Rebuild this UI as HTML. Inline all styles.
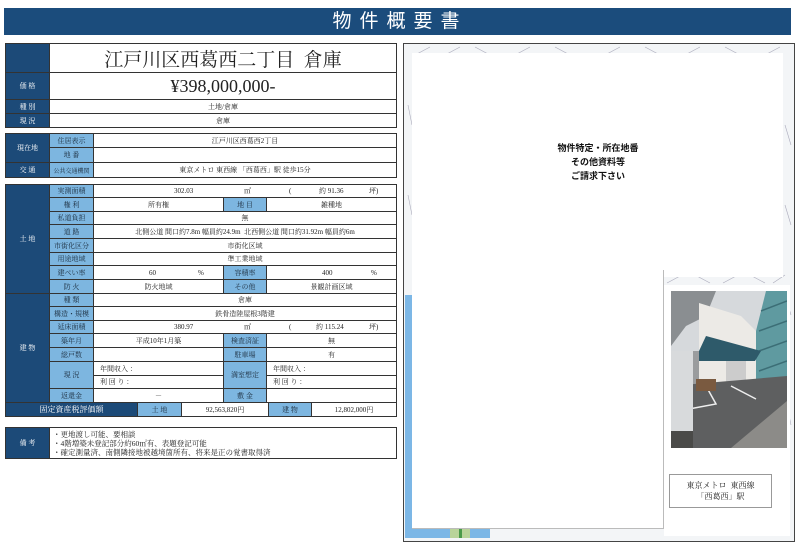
<!DOCTYPE html>
<html><head><meta charset="utf-8"><style>
*{margin:0;padding:0;box-sizing:border-box}
body{width:797px;height:550px;background:#fff;position:relative;overflow:hidden;font-family:"Liberation Serif","Noto Serif CJK SC",serif;color:#222}
div{position:absolute}
.c{border:1px solid #333;display:flex;align-items:center;justify-content:center;font-size:7px;white-space:nowrap;overflow:hidden}
.d{background:#1c4a78;color:#fff}
.l{background:#7db6e0;color:#1a2a3a}
.w{background:#fff}
</style></head><body>
<div style="left:4px;top:8px;width:787px;height:27px;background:#1b4c7c"></div>
<div style="left:300px;top:9px;width:200px;height:26px;color:#fff;font-family:'Liberation Sans','Noto Sans CJK JP',sans-serif;font-size:19px;letter-spacing:8px;text-align:center;line-height:26px">物件概要書</div>

<div class="c d" style="left:5px;top:43px;width:45px;height:30px"></div>
<div class="c w" style="left:49px;top:43px;width:348px;height:30px;font-size:19px">江戸川区西葛西二丁目&nbsp;&nbsp;倉庫</div>
<div class="c d" style="left:5px;top:72px;width:45px;height:28px">価 格</div>
<div class="c w" style="left:49px;top:72px;width:348px;height:28px;font-size:18px">¥398,000,000-</div>
<div class="c d" style="left:5px;top:99px;width:45px;height:15px">種 別</div>
<div class="c w" style="left:49px;top:99px;width:348px;height:15px">土地/倉庫</div>
<div class="c d" style="left:5px;top:113px;width:45px;height:15px">現 況</div>
<div class="c w" style="left:49px;top:113px;width:348px;height:15px">倉庫</div>

<div class="c d" style="left:5px;top:133px;width:45px;height:30px">現在地</div>
<div class="c l" style="left:49px;top:133px;width:45px;height:15px">住居表示</div>
<div class="c w" style="left:93px;top:133px;width:304px;height:15px">江戸川区西葛西2丁目</div>
<div class="c l" style="left:49px;top:147px;width:45px;height:16px">地 番</div>
<div class="c w" style="left:93px;top:147px;width:304px;height:16px"></div>
<div class="c d" style="left:5px;top:162px;width:45px;height:16px">交 通</div>
<div class="c l" style="left:49px;top:162px;width:45px;height:16px;font-size:6px">公共交通機関</div>
<div class="c w" style="left:93px;top:162px;width:304px;height:16px">東京メトロ 東西線 「西葛西」駅 徒歩15分</div>

<div class="c d" style="left:5px;top:184px;width:45px;height:110px">土 地</div>
<div class="c d" style="left:5px;top:293px;width:45px;height:110px">建 物</div>
<div class="c l" style="left:49px;top:184px;width:45px;height:14px">実測面積</div>
<div class="c w" style="left:93px;top:184px;width:304px;height:14px;justify-content:flex-start"><span style="position:absolute;left:80px">302.03</span><span style="position:absolute;left:150px">㎡</span><span style="position:absolute;left:195px">(</span><span style="position:absolute;left:225px">約 91.36</span><span style="position:absolute;left:275px">坪)</span></div>
<div class="c l" style="left:49px;top:197px;width:45px;height:15px">権 利</div>
<div class="c w" style="left:93px;top:197px;width:131px;height:15px">所有権</div>
<div class="c l" style="left:223px;top:197px;width:44px;height:15px">地 目</div>
<div class="c w" style="left:266px;top:197px;width:131px;height:15px">雑種地</div>
<div class="c l" style="left:49px;top:211px;width:45px;height:14px">私道負担</div>
<div class="c w" style="left:93px;top:211px;width:304px;height:14px">無</div>
<div class="c l" style="left:49px;top:224px;width:45px;height:15px">道 路</div>
<div class="c w" style="left:93px;top:224px;width:304px;height:15px">北側公道 間口約7.8m 幅員約24.9m &nbsp;北西側公道 間口約31.92m 幅員約6m</div>
<div class="c l" style="left:49px;top:238px;width:45px;height:15px">市街化区分</div>
<div class="c w" style="left:93px;top:238px;width:304px;height:15px">市街化区域</div>
<div class="c l" style="left:49px;top:252px;width:45px;height:14px">用途地域</div>
<div class="c w" style="left:93px;top:252px;width:304px;height:14px">準工業地域</div>
<div class="c l" style="left:49px;top:265px;width:45px;height:15px">建ぺい率</div>
<div class="c w" style="left:93px;top:265px;width:131px;height:15px"><span style="position:absolute;left:55px">60</span><span style="position:absolute;left:104px">%</span></div>
<div class="c l" style="left:223px;top:265px;width:44px;height:15px">容積率</div>
<div class="c w" style="left:266px;top:265px;width:131px;height:15px"><span style="position:absolute;left:55px">400</span><span style="position:absolute;left:104px">%</span></div>
<div class="c l" style="left:49px;top:279px;width:45px;height:15px">防 火</div>
<div class="c w" style="left:93px;top:279px;width:131px;height:15px">防火地域</div>
<div class="c l" style="left:223px;top:279px;width:44px;height:15px">その他</div>
<div class="c w" style="left:266px;top:279px;width:131px;height:15px">景観計画区域</div>

<div class="c l" style="left:49px;top:293px;width:45px;height:14px">種 類</div>
<div class="c w" style="left:93px;top:293px;width:304px;height:14px">倉庫</div>
<div class="c l" style="left:49px;top:306px;width:45px;height:15px">構造・規模</div>
<div class="c w" style="left:93px;top:306px;width:304px;height:15px">鉄骨造陸屋根3階建</div>
<div class="c l" style="left:49px;top:320px;width:45px;height:14px">延床面積</div>
<div class="c w" style="left:93px;top:320px;width:304px;height:14px"><span style="position:absolute;left:80px">380.97</span><span style="position:absolute;left:150px">㎡</span><span style="position:absolute;left:195px">(</span><span style="position:absolute;left:222px">約 115.24</span><span style="position:absolute;left:275px">坪)</span></div>
<div class="c l" style="left:49px;top:333px;width:45px;height:15px">築年月</div>
<div class="c w" style="left:93px;top:333px;width:131px;height:15px">平成10年1月築</div>
<div class="c l" style="left:223px;top:333px;width:44px;height:15px">検査済証</div>
<div class="c w" style="left:266px;top:333px;width:131px;height:15px">無</div>
<div class="c l" style="left:49px;top:347px;width:45px;height:15px">総戸数</div>
<div class="c w" style="left:93px;top:347px;width:131px;height:15px"></div>
<div class="c l" style="left:223px;top:347px;width:44px;height:15px">駐車場</div>
<div class="c w" style="left:266px;top:347px;width:131px;height:15px">有</div>
<div class="c l" style="left:49px;top:361px;width:45px;height:28px">現 況</div>
<div class="c w" style="left:93px;top:361px;width:131px;height:15px;justify-content:flex-start;padding-left:6px">年間収入 ：</div>
<div class="c w" style="left:93px;top:375px;width:131px;height:14px;justify-content:flex-start;padding-left:6px">利 回 り ：</div>
<div class="c l" style="left:223px;top:361px;width:44px;height:28px">満室想定</div>
<div class="c w" style="left:266px;top:361px;width:131px;height:15px;justify-content:flex-start;padding-left:6px">年間収入 ：</div>
<div class="c w" style="left:266px;top:375px;width:131px;height:14px;justify-content:flex-start;padding-left:6px">利 回 り ：</div>
<div class="c l" style="left:49px;top:388px;width:45px;height:15px">返還金</div>
<div class="c w" style="left:93px;top:388px;width:131px;height:15px">－</div>
<div class="c l" style="left:223px;top:388px;width:44px;height:15px">敷 金</div>
<div class="c w" style="left:266px;top:388px;width:131px;height:15px"></div>
<div class="c d" style="left:5px;top:402px;width:133px;height:15px;font-size:8px">固定資産税評価額</div>
<div class="c l" style="left:137px;top:402px;width:45px;height:15px">土 地</div>
<div class="c w" style="left:181px;top:402px;width:88px;height:15px">92,563,820円</div>
<div class="c l" style="left:268px;top:402px;width:44px;height:15px">建 物</div>
<div class="c w" style="left:311px;top:402px;width:86px;height:15px">12,802,000円</div>

<div class="c d" style="left:5px;top:427px;width:45px;height:32px">備 考</div>
<div class="c w" style="left:49px;top:427px;width:348px;height:32px;display:block;padding:2px 3px;font-size:7.5px;line-height:9px">・更地渡し可能、要相談<br>・4階増築未登記部分約60㎡有、表題登記可能<br>・確定測量済、南側隣接地被越境箇所有、将来是正の覚書取得済</div>

<div style="left:403px;top:43px;width:392px;height:499px;border:1.5px solid #444;background:#f3f5f7"></div>
<svg style="position:absolute;left:405px;top:45px" width="388" height="495">
<g stroke="#aab" stroke-width="0.6" fill="none">
<path d="M10 10 L25 2 M40 10 L55 2 M70 2 L85 10 M110 10 L125 2 M150 2 L165 10 M200 10 L215 2 M240 2 L255 10 M280 10 L295 2 M320 2 L335 10 M360 10 L375 2"/>
<path d="M262 238 L277 230 M290 230 L305 238 M318 238 L333 230 M345 230 L360 238 M368 238 L380 230"/>
<path d="M3 60 L7 80 M3 150 L7 170 M380 80 L386 100 M380 160 L386 180 M380 250 L386 270 M380 350 L386 380"/>
</g>
<rect x="0" y="250" width="7" height="243" fill="#7cb7e6"/>
<rect x="0" y="483" width="85" height="10" fill="#7cb7e6"/>
<rect x="45" y="483" width="20" height="10" fill="#b9d49a"/>
<rect x="54" y="483" width="3" height="10" fill="#4a9a4a"/>
</svg>
<div style="left:412px;top:53px;width:371px;height:224px;background:#fff"></div>
<div style="left:412px;top:270px;width:252px;height:259px;background:#fff;border-right:1px solid #bbb;border-bottom:1px solid #bbb"></div>
<div style="left:664px;top:285px;width:126px;height:251px;background:#fff"></div>
<div style="left:500px;top:141px;width:196px;text-align:center;font-family:'Liberation Sans','Noto Sans CJK JP',sans-serif;font-weight:bold;font-size:9px;line-height:14px;color:#111">物件特定・所在地番<br>その他資料等<br>ご請求下さい</div>

<svg style="position:absolute;left:671px;top:291px" width="116" height="157">
<rect width="116" height="157" fill="#9a9c9e"/>
<rect width="116" height="60" fill="#d6d9dc"/>
<path d="M0 0 H45 L35 25 L15 35 L0 55Z" fill="#8a8e91"/>
<polygon points="28,12 70,25 85,40 85,100 28,100" fill="#eceae6"/>
<polygon points="85,40 95,0 116,0 116,95 85,95" fill="#5f9aa0"/>
<g stroke="#3c6e76" stroke-width="1.5"><line x1="90" y1="20" x2="116" y2="10"/><line x1="88" y1="40" x2="116" y2="30"/><line x1="88" y1="60" x2="116" y2="50"/><line x1="88" y1="80" x2="116" y2="70"/></g>
<polygon points="28,60 35,45 90,60 84,70 28,70" fill="#2e5a6a"/>
<rect x="55" y="70" width="20" height="27" fill="#ccc"/>
<polygon points="0,95 116,85 116,157 0,157" fill="#5e5f60"/>
<polygon points="60,157 116,110 116,157" fill="#8c8b88"/>
<path d="M18 118 L45 113 L35 95 M60 95 L85 108" stroke="#eee" stroke-width="1.5" fill="none"/>
<rect x="0" y="60" width="22" height="80" fill="#d8dadc"/>
<rect x="0" y="140" width="22" height="17" fill="#4a4a48"/>
<rect x="25" y="88" width="20" height="12" fill="#7a5a40"/>
</svg>
<div style="left:669px;top:474px;width:103px;height:34px;border:1px solid #999;background:#fff;text-align:center;font-size:8px;line-height:11px;padding-top:5px">東京メトロ&nbsp;&nbsp;東西線<br>「西葛西」駅</div>
</body></html>
